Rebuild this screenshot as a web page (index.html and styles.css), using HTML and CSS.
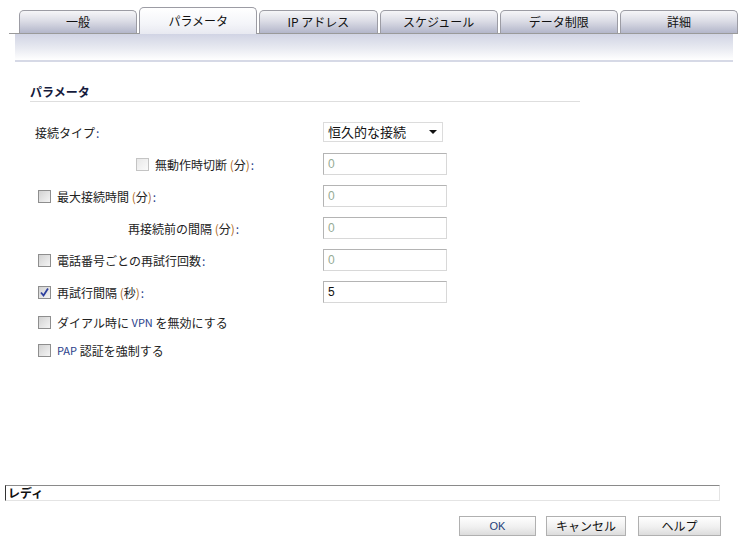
FILE: index.html
```html
<!DOCTYPE html>
<html lang="ja">
<head>
    <meta charset="UTF-8">
    <title>パラメータ</title>
    <link rel="stylesheet" href="styles.css">
</head>
<body>
    <div class="tabs">
        <div class="tab">一般</div>
        <div class="tab active">パラメータ</div>
        <div class="tab">IP アドレス</div>
        <div class="tab">スケジュール</div>
        <div class="tab">データ制限</div>
        <div class="tab">詳細</div>
    </div>
    <div class="band"></div>

    <div class="content">
        <div class="section-title">パラメータ</div>

        <div class="form">
            <div class="row">
                <div class="label">接続タイプ<span class="colon">:</span></div>
                <div class="field">
                    <div class="select">恒久的な接続<span class="arrow"></span></div>
                </div>
            </div>
            <div class="row">
                <div class="label sub"><span class="check disabled"></span>無動作時切断 <span class="paren">(</span>分<span class="paren">)</span><span class="colon">:</span></div>
                <div class="field"><div class="input dim">0</div></div>
            </div>
            <div class="row">
                <div class="label"><span class="check"></span>最大接続時間 <span class="paren">(</span>分<span class="paren">)</span><span class="colon">:</span></div>
                <div class="field"><div class="input dim">0</div></div>
            </div>
            <div class="row">
                <div class="label sub2">再接続前の間隔 <span class="paren">(</span>分<span class="paren">)</span><span class="colon">:</span></div>
                <div class="field"><div class="input dim">0</div></div>
            </div>
            <div class="row">
                <div class="label"><span class="check"></span>電話番号ごとの再試行回数<span class="colon">:</span></div>
                <div class="field"><div class="input dim">0</div></div>
            </div>
            <div class="row">
                <div class="label"><span class="check checked">
                    <svg width="11" height="11" viewBox="0 0 11 11"><path d="M2 5.5 L4.5 8.5 L9 1.5" fill="none" stroke="#2d3f9e" stroke-width="1.8"/></svg>
                </span>再試行間隔 <span class="paren">(</span>秒<span class="paren">)</span><span class="colon">:</span></div>
                <div class="field"><div class="input">5</div></div>
            </div>
            <div class="row short">
                <div class="label"><span class="check"></span>ダイアル時に <span class="latin">VPN</span> を無効にする</div>
            </div>
            <div class="row short">
                <div class="label"><span class="check"></span><span class="latin">PAP</span> 認証を強制する</div>
            </div>
        </div>
    </div>

    <div class="status">レディ</div>

    <div class="buttons">
        <div class="btn ok">OK</div>
        <div class="btn cancel">キャンセル</div>
        <div class="btn help">ヘルプ</div>
    </div>
</body>
</html>
```

FILE: styles.css
```css
body {
    margin: 0;
    width: 744px;
    height: 541px;
    overflow: hidden;
    background: #fff;
    font-family: "Noto Sans CJK JP", "Liberation Sans", sans-serif;
    font-size: 12px;
    color: #222;
}
.tabs {
    display: flex;
    align-items: flex-end;
    gap: 2px;
    margin: 8px 0 0 9px;
    width: 729px;
    height: 26px;
    padding-left: 10px;
    box-sizing: border-box;
    border-bottom: 1px solid #9a9a9a;
}
.tab {
    width: 118px;
    height: 22px;
    line-height: 21px;
    text-align: center;
    border: 1px solid #9c9ca4;
    border-bottom: none;
    border-radius: 5px 5px 0 0;
    background: linear-gradient(#f6f6f8 0%, #dcdde6 45%, #b3b6ca 100%);
    color: #111;
}
.tab.active {
    height: 26px;
    line-height: 25px;
    margin-bottom: -1px;
    background: linear-gradient(#ffffff 0%, #f4f5f9 60%, #e8e9f1 100%);
}
.band {
    margin-left: 15px;
    width: 718px;
    height: 26px;
    background: linear-gradient(#d1d4e4 0%, #e6e8f0 50%, #ffffff 100%);
    border-bottom: 2px solid #d6d9e6;
}
.content {
    height: 423px;
    padding: 22px 0 0 30px;
    box-sizing: border-box;
}
.section-title {
    width: 550px;
    font-weight: bold;
    color: #141a3c;
    padding-bottom: 2px;
    border-bottom: 1px solid #dedede;
    line-height: 15px;
}
.form {
    margin-top: 14px;
}
.row {
    display: flex;
    align-items: center;
    height: 32px;
}
.row.short {
    height: 28px;
}
.label {
    width: 293px;
    display: flex;
    align-items: center;
    padding-left: 5px;
    box-sizing: border-box;
    white-space: pre;
}
.label.sub {
    padding-left: 103px;
}
.label.sub2 {
    padding-left: 98px;
}
.colon {
    color: #2c3f8c;
    margin-left: 1px;
}
.paren {
    color: #b06a1c;
}
.latin {
    color: #2c3f8c;
    font-size: 11px;
}
.check {
    width: 11px;
    height: 11px;
    border: 1px solid #8e8e8e;
    background: linear-gradient(135deg, #d2d2d2, #f4f4f4);
    margin: 0 6px 0 3px;
    display: flex;
    align-items: center;
    justify-content: center;
}
.check.disabled {
    border-color: #c4c4c4;
    background: linear-gradient(135deg, #e8e8e8, #fafafa);
}
.field {
    display: flex;
}
.select {
    width: 120px;
    height: 20px;
    box-sizing: border-box;
    border: 1px solid #dcdcdc;
    font-size: 13px;
    line-height: 18px;
    padding-left: 4px;
    color: #111;
    position: relative;
}
.arrow {
    position: absolute;
    right: 5px;
    top: 7px;
    border-left: 4px solid transparent;
    border-right: 4px solid transparent;
    border-top: 4px solid #111;
}
.input {
    width: 124px;
    height: 22px;
    box-sizing: border-box;
    border: 1px solid #b4b4b4;
    border-right-color: #d8d8d8;
    border-bottom-color: #d8d8d8;
    padding-left: 4px;
    line-height: 20px;
    font-family: "Liberation Sans", sans-serif;
    font-size: 12px;
    color: #111;
}
.input.dim {
    color: #95ab95;
}
.status {
    margin-left: 5px;
    width: 715px;
    height: 16px;
    box-sizing: border-box;
    border-top: 1px solid #8a8a8a;
    border-left: 1px solid #333;
    border-bottom: 1px solid #e4e4e4;
    border-right: 1px solid #e4e4e4;
    font-weight: bold;
    line-height: 13px;
    padding-left: 2px;
    color: #111;
}
.buttons {
    display: flex;
    margin: 15px 0 0 459px;
    gap: 10px;
}
.btn {
    height: 20px;
    box-sizing: border-box;
    border: 1px solid #b0b0b0;
    background: linear-gradient(#ffffff 0%, #f0f0f0 55%, #dcdcdc 100%);
    text-align: center;
    line-height: 18px;
    color: #111;
}
.btn.ok {
    width: 77px;
    color: #23407a;
    font-family: "Liberation Sans", sans-serif;
    font-size: 11px;
}
.btn.cancel {
    width: 80px;
}
.btn.help {
    width: 83px;
    margin-left: 2px;
}
```
